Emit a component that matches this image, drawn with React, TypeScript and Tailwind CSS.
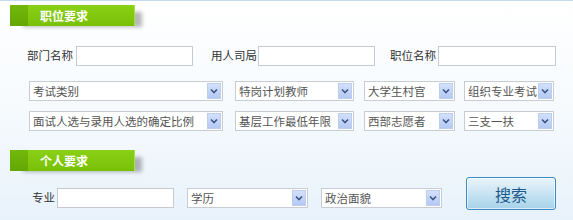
import type { ReactNode } from "react";

const font = { fontFamily: '"Noto Sans CJK SC", "Liberation Sans", sans-serif' };

function Tab({ children }: { children: ReactNode }) {
  return (
    <div className="ml-[10px] flex h-[21px] w-[125px] shadow-[10px_4px_4px_-3px_rgba(0,0,0,0.28)]">
      <div className="w-[18px] bg-gradient-to-b from-[#72b80a] to-[#64a705]" />
      <div className="flex flex-1 items-center border-r border-[#a8e040] bg-gradient-to-b from-[#8ad016] to-[#78c006] pl-[12px] text-[12px] font-bold text-white">
        {children}
      </div>
    </div>
  );
}

function Field({ label, width, lw, ml }: { label: string; width: string; lw: string; ml: string }) {
  return (
    <div className={`flex items-center ${ml}`}>
      <span className={`${lw} whitespace-nowrap text-[11.5px] text-[#333]`}>{label}</span>
      <div className={`h-[20px] ${width} border border-[#c6cbd1] bg-white`} />
    </div>
  );
}

function Select({ text, width, ml }: { text: string; width: string; ml: string }) {
  return (
    <div
      className={`flex h-[20px] ${width} ${ml} items-center justify-between border border-[#c8cdd5] bg-white pl-[3px]`}
    >
      <span className="min-w-0 whitespace-nowrap text-[11.5px] leading-[18px] text-[#555]">{text}</span>
      <div className="mr-[1px] flex h-[16px] w-[14px] shrink-0 items-center justify-center border border-[#bccdf0] bg-gradient-to-b from-[#d2e0fb] to-[#b4c9f3]">
        <svg width="8" height="6" viewBox="0 0 8 6">
          <path d="M1 1.5 L4 4.5 L7 1.5" stroke="#3e5684" strokeWidth="1.6" fill="none" />
        </svg>
      </div>
    </div>
  );
}

export default function App() {
  return (
    <div
      style={font}
      className="h-[220px] w-[573px] overflow-hidden border-t border-[#c6dcf1] bg-gradient-to-b from-white via-[#f6fafd] to-[#e8f2fb]"
    >
      <div className="pt-[4px]">
        <Tab>职位要求</Tab>
      </div>

      <div className="mt-[20px] flex items-center">
        <Field label="部门名称" lw="w-[49px]" width="w-[117px]" ml="ml-[27px]" />
        <Field label="用人司局" lw="w-[47px]" width="w-[117px]" ml="ml-[18px]" />
        <Field label="职位名称" lw="w-[48px]" width="w-[118px]" ml="ml-[15px]" />
      </div>

      <div className="mt-[15px] flex">
        <Select text="考试类别" width="w-[194px]" ml="ml-[29px]" />
        <Select text="特岗计划教师" width="w-[119px]" ml="ml-[12px]" />
        <Select text="大学生村官" width="w-[91px]" ml="ml-[10px]" />
        <Select text="组织专业考试" width="w-[90px]" ml="ml-[9px]" />
      </div>

      <div className="mt-[10px] flex">
        <Select text="面试人选与录用人选的确定比例" width="w-[194px]" ml="ml-[29px]" />
        <Select text="基层工作最低年限" width="w-[119px]" ml="ml-[12px]" />
        <Select text="西部志愿者" width="w-[91px]" ml="ml-[10px]" />
        <Select text="三支一扶" width="w-[90px]" ml="ml-[9px]" />
      </div>

      <div className="mt-[19px]">
        <Tab>个人要求</Tab>
      </div>

      <div className="mt-[6px] flex items-start">
        <div className="mt-[11px] flex">
          <Field label="专业" lw="w-[25px]" width="w-[117px]" ml="ml-[32px]" />
          <Select text="学历" width="w-[121px]" ml="ml-[13px]" />
          <Select text="政治面貌" width="w-[121px]" ml="ml-[13px]" />
        </div>
        <button className="ml-[24px] h-[33px] w-[90px] rounded-[3px] border border-[#3b8cc2] bg-gradient-to-b from-[#eaf5fb] to-[#a6d2ea] text-[16px] text-[#1d5a8c] shadow-[inset_0_0_0_1px_rgba(255,255,255,0.6)]">
          搜索
        </button>
      </div>
    </div>
  );
}
